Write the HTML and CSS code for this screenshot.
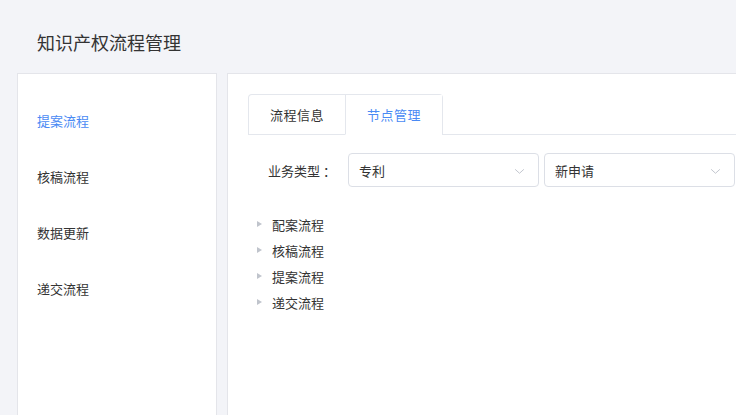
FILE: index.html
```html
<!DOCTYPE html>
<html lang="zh">
<head>
<meta charset="utf-8">
<title>知识产权流程管理</title>
<link rel="stylesheet" href="styles.css">
</head>
<body>
<header class="page-header">
  <h1 class="page-title">知识产权流程管理</h1>
</header>
<main class="layout">
  <aside class="side-panel">
    <ul class="side-menu">
      <li class="side-item active">提案流程</li>
      <li class="side-item">核稿流程</li>
      <li class="side-item">数据更新</li>
      <li class="side-item">递交流程</li>
    </ul>
  </aside>
  <section class="content-panel">
    <div class="tabs-header">
      <div class="tab-nav">
        <div class="tab">流程信息</div>
        <div class="tab active">节点管理</div>
      </div>
    </div>
    <div class="form-row">
      <label class="form-label">业务类型 ：</label>
      <div class="select">
        <span class="select-value">专利</span>
        <svg class="chevron" viewBox="0 0 12 8" width="11" height="7"><path d="M1 1.5 L6 6 L11 1.5" fill="none" stroke="#c0c4cc" stroke-width="1.1"/></svg>
      </div>
      <div class="select">
        <span class="select-value">新申请</span>
        <svg class="chevron" viewBox="0 0 12 8" width="11" height="7"><path d="M1 1.5 L6 6 L11 1.5" fill="none" stroke="#c0c4cc" stroke-width="1.1"/></svg>
      </div>
    </div>
    <ul class="tree">
      <li class="tree-node"><span class="caret"></span><span class="tree-label">配案流程</span></li>
      <li class="tree-node"><span class="caret"></span><span class="tree-label">核稿流程</span></li>
      <li class="tree-node"><span class="caret"></span><span class="tree-label">提案流程</span></li>
      <li class="tree-node"><span class="caret"></span><span class="tree-label">递交流程</span></li>
    </ul>
  </section>
</main>
</body>
</html>
```

FILE: styles.css
```css
* { box-sizing: border-box; }
html, body {
  margin: 0;
  padding: 0;
  width: 736px;
  height: 415px;
  overflow: hidden;
  background: #f3f4f8;
  font-family: "Noto Sans CJK SC", "Noto Sans", sans-serif;
  color: #333;
}
.page-header {
  height: 73px;
  padding: 30px 0 0 37px;
}
.page-title {
  margin: 0;
  font-size: 18px;
  font-weight: 400;
  line-height: 24px;
  color: #333;
}
.layout {
  display: flex;
  gap: 10px;
  padding-left: 17px;
  height: 342px;
}
.side-panel {
  width: 200px;
  flex: none;
  background: #fff;
  border: 1px solid #e4e5ea;
  border-bottom: none;
}
.side-menu {
  list-style: none;
  margin: 0;
  padding: 19px 0 0 19px;
}
.side-item {
  height: 56px;
  line-height: 56px;
  font-size: 13px;
  color: #333;
}
.side-item.active { color: #4a8af4; }
.content-panel {
  flex: 1;
  min-width: 0;
  background: #fff;
  border: 1px solid #e4e5ea;
  border-bottom: none;
  border-right: none;
  padding: 20px 0 0 20px;
}
.tabs-header {
  display: flex;
  border-bottom: 1px solid #e4e7ed;
}
.tab-nav {
  display: flex;
  border: 1px solid #e4e7ed;
  border-bottom: none;
  border-radius: 4px 4px 0 0;
}
.tab {
  width: 97px;
  height: 39px;
  line-height: 39px;
  text-align: center;
  font-size: 13px;
  letter-spacing: 0.5px;
  color: #333;
  border-left: 1px solid #e4e7ed;
}
.tab:first-child { border-left: none; width: 96px; }
.tab.active {
  color: #4a8af4;
  background: #fff;
  border-bottom: 1px solid #fff;
  margin-bottom: -1px;
  height: 40px;
}
.form-row {
  display: flex;
  align-items: center;
  margin-top: 18px;
}
.form-label {
  width: 100px;
  padding-right: 12px;
  text-align: right;
  font-size: 13px;
  color: #333;
  white-space: nowrap;
}
.select {
  width: 191px;
  flex: none;
  height: 34px;
  margin-right: 5px;
  border: 1px solid #dcdfe6;
  border-radius: 4px;
  display: flex;
  align-items: center;
  justify-content: space-between;
  padding: 0 13px 0 10px;
  font-size: 13px;
  color: #333;
}
.select:last-child { margin-right: 0; }
.chevron { display: block; margin-top: 2px; }
.tree {
  list-style: none;
  margin: 24px 0 0 0;
  padding: 0 0 0 9px;
}
.tree-node {
  height: 26px;
  display: flex;
  align-items: center;
  font-size: 13px;
  color: #333;
}
.caret {
  width: 0;
  height: 0;
  border-top: 3.5px solid transparent;
  border-bottom: 3.5px solid transparent;
  border-left: 5px solid #c0c4cc;
  margin-right: 10px;
}
```
